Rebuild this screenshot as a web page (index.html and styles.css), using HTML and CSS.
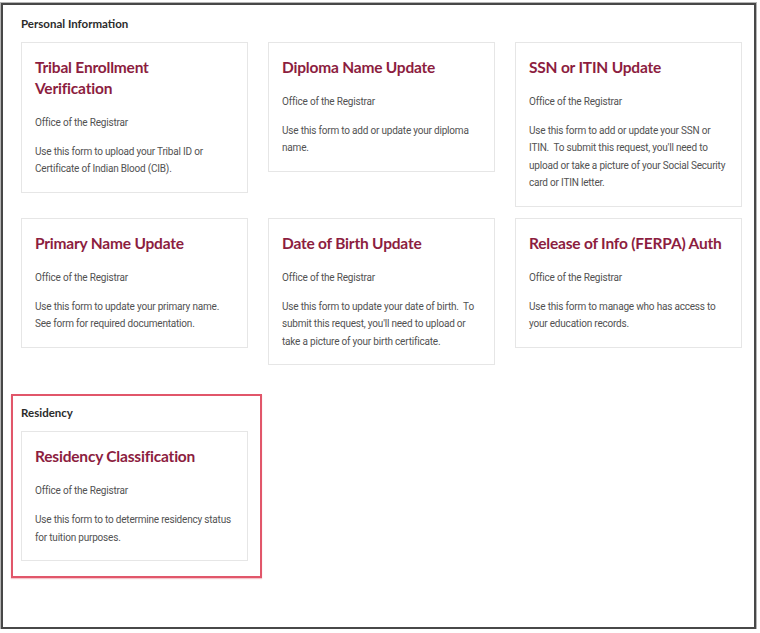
FILE: index.html
```html
<!DOCTYPE html>
<html lang="en">
<head>
<meta charset="utf-8">
<title>Forms</title>
<link rel="stylesheet" href="styles.css">
</head>
<body>
<div class="frame">
  <section class="group">
    <h2 class="group-title">Personal Information</h2>
    <div class="cards">
      <article class="card">
        <h3 class="card-title">Tribal Enrollment Verification</h3>
        <p class="card-office">Office of the Registrar</p>
        <p class="card-desc">Use this form to upload your Tribal ID or Certificate of Indian Blood (CIB).</p>
      </article>
      <article class="card">
        <h3 class="card-title">Diploma Name Update</h3>
        <p class="card-office">Office of the Registrar</p>
        <p class="card-desc">Use this form to add or update your diploma name.</p>
      </article>
      <article class="card">
        <h3 class="card-title">SSN or ITIN Update</h3>
        <p class="card-office">Office of the Registrar</p>
        <p class="card-desc">Use this form to add or update your SSN or ITIN.&nbsp; To submit this request, you'll need to upload or take a picture of your Social Security card or ITIN letter.</p>
      </article>
      <article class="card">
        <h3 class="card-title">Primary Name Update</h3>
        <p class="card-office">Office of the Registrar</p>
        <p class="card-desc">Use this form to update your primary name. See form for required documentation.</p>
      </article>
      <article class="card">
        <h3 class="card-title">Date of Birth Update</h3>
        <p class="card-office">Office of the Registrar</p>
        <p class="card-desc">Use this form to update your date of birth.&nbsp; To submit this request, you'll need to upload or take a picture of your birth certificate.</p>
      </article>
      <article class="card">
        <h3 class="card-title">Release of Info (FERPA) Auth</h3>
        <p class="card-office">Office of the Registrar</p>
        <p class="card-desc">Use this form to manage who has access to your education records.</p>
      </article>
    </div>
  </section>

  <section class="group group-highlight">
    <h2 class="group-title">Residency</h2>
    <div class="cards">
      <article class="card">
        <h3 class="card-title">Residency Classification</h3>
        <p class="card-office">Office of the Registrar</p>
        <p class="card-desc">Use this form to to determine residency status for tuition purposes.</p>
      </article>
    </div>
  </section>
</div>
</body>
</html>
```

FILE: styles.css
```css
* {
  box-sizing: border-box;
}

html,
body {
  margin: 0;
  padding: 0;
  background: #ffffff;
}

body {
  font-family: "Lato", "Liberation Sans", sans-serif;
  color: #4a4a4a;
}

.frame {
  margin: 3px 0 0 1px;
  width: 755px;
  height: 626px;
  border: 2px solid #484848;
  box-shadow: 0 0 0 1px #b5b5b5;
  padding: 11px 18px 0 18px;
  background: #ffffff;
}

.group-title {
  margin: 0 0 10px 0;
  font-size: 11.5px;
  line-height: 16px;
  font-weight: 700;
  color: #2b2b2b;
}

.cards {
  display: grid;
  grid-template-columns: repeat(3, 227px);
  column-gap: 20px;
  row-gap: 11px;
  align-items: start;
}

.card {
  border: 1px solid #e6e6e6;
  background: #ffffff;
  padding: 14px 12px 14px 13px;
}

.card-title {
  margin: 0 7px 15px 0;
  font-size: 15.5px;
  line-height: 21px;
  font-weight: 700;
  letter-spacing: -0.2px;
  color: #8c1d40;
}

.card-office,
.card-desc {
  margin: 0;
  font-family: "Roboto", "Liberation Sans", sans-serif;
  font-size: 10px;
  line-height: 17.6px;
  letter-spacing: -0.2px;
  color: #525252;
}

.card-office {
  margin-bottom: 11px;
}

/* highlighted section outline */
.group-highlight {
  margin: 29px 0 0 -10px;
  width: 251px;
  border: 2px solid #e1566a;
  box-shadow: 0 1px 1px rgba(225, 86, 106, 0.35);
  padding: 9px 12px 15px 8px;
}

.group-highlight .cards {
  grid-template-columns: 227px;
}
```
